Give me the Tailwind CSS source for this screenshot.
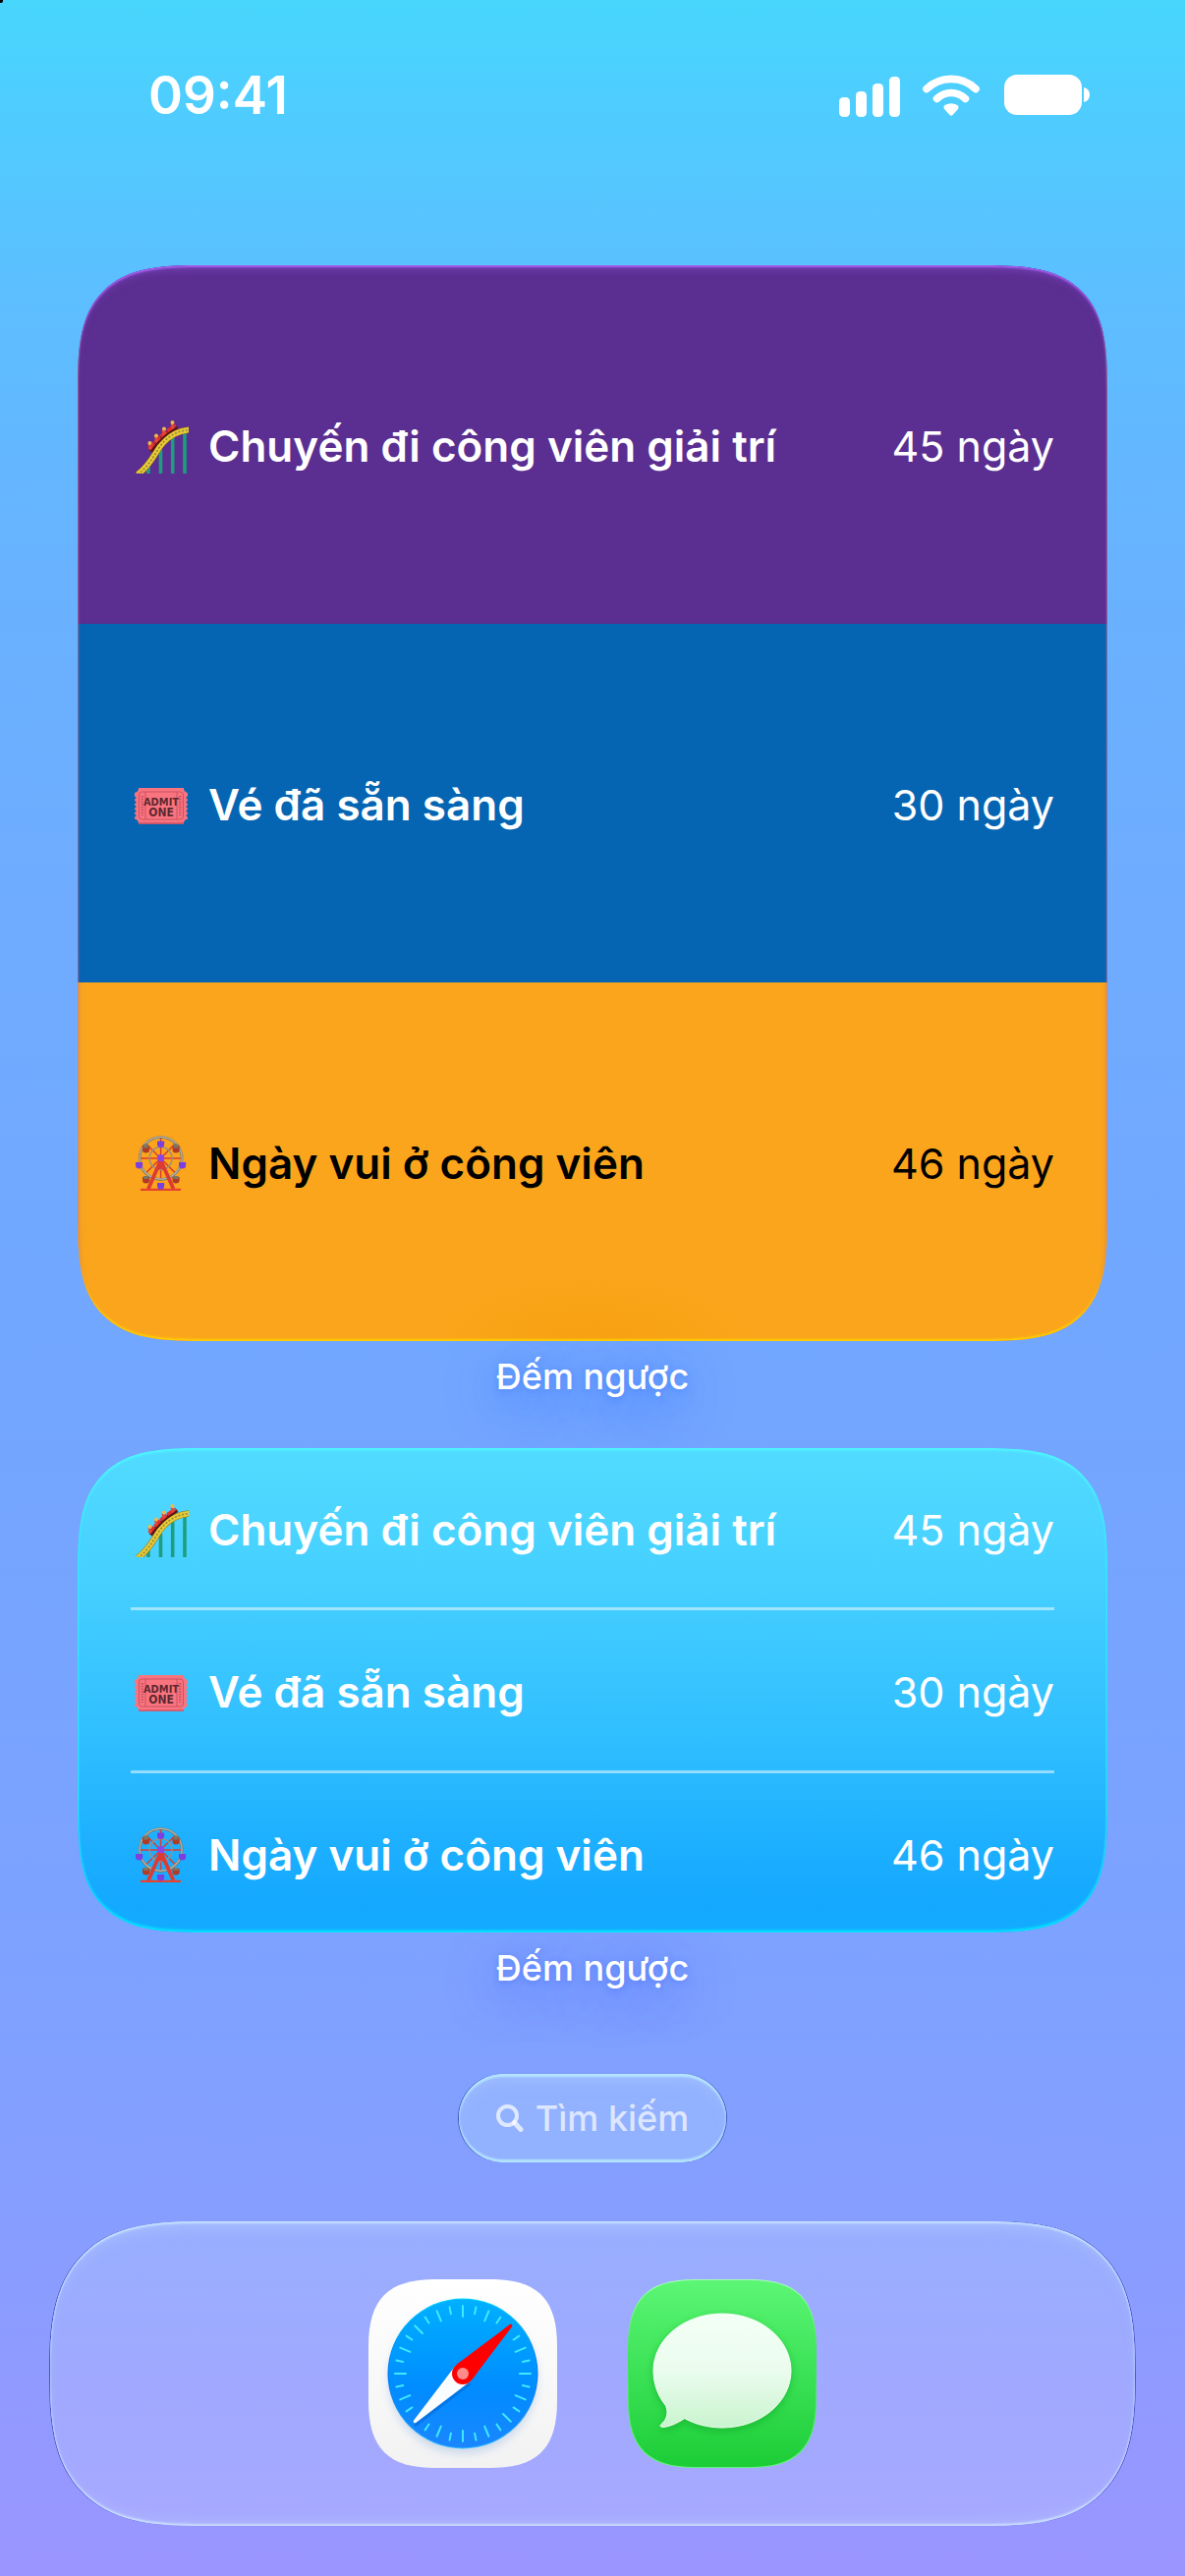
<!DOCTYPE html>
<html lang="vi">
<head>
<meta charset="utf-8">
<meta name="viewport" content="width=device-width, initial-scale=1">
<title>Đếm ngược</title>
<script src="https://cdn.jsdelivr.net/npm/@tailwindcss/browser@4"></script>
</head>
<body class="flex min-h-screen flex-col bg-[linear-gradient(to_bottom,#47d6fc_0%,#50cbff_5%,#5cbfff_11%,#68b2ff_22%,#6facff_35%,#72a6ff_54%,#7ca2ff_74%,#869eff_86%,#9b95ff_100%)] font-['Inter',sans-serif] text-white">

<!-- shared symbols -->
<svg class="absolute size-0" aria-hidden="true">
  <defs>
    <symbol id="coaster" viewBox="0 0 56 56">
      <g stroke="#1f9d80" stroke-width="3.600"><path d="M15 56V48M27.500 56V32M39.700 56V19M52 56V12"/></g>
      <path d="M4 57C19 46 22 33 30 24.500S46 12.500 57 11.500" fill="none" stroke="#8f6d10" stroke-width="6.500"/>
      <path d="M4 57C19 46 22 33 30 24.500S46 12.500 57 11.500" fill="none" stroke="#e6cb36" stroke-width="5.500"/>
      <path d="M4 57C19 46 22 33 30 24.500S46 12.500 57 11.500" fill="none" stroke="#9a8636" stroke-width="1.600" stroke-dasharray="2 1.800"/>
      <path d="M17.500 33.500C24 23 33 14.500 44.500 8.500" fill="none" stroke="#5a1414" stroke-width="3.500"/>
      <path d="M16 31.500C23 21.500 32 13 43 7" fill="none" stroke="#e0302c" stroke-width="3.400" stroke-dasharray="8 .8"/>
      <g fill="#e0483a"><path d="M14.500 26l3 1 1.500 3-3 2zM21 18.500l3 1 1.500 3-3 2zM28.500 11.500l3 1 1.500 3-3 2zM37.500 5l3 1 1.500 3-3 2z"/></g>
      <g fill="#f0b84a"><circle cx="16.500" cy="25" r="2"/><circle cx="23" cy="17.500" r="2"/><circle cx="31" cy="10.500" r="2"/><circle cx="39.500" cy="4" r="2"/></g>
    </symbol>
    <symbol id="ticket" viewBox="0 0 56 56">
      <path d="M5 11h46c0 3 1 4 4 5v3.500a1.500 1.500 0 0 0 0 3v1.500a1.500 1.500 0 0 0 0 3v1.500a1.500 1.500 0 0 0 0 3v1.500a1.500 1.500 0 0 0 0 3v1.500a1.500 1.500 0 0 0 0 3v2c-3 1-4 2-4 5H5c0-3-1-4-4-5v-2a1.500 1.500 0 0 0 0-3v-1.500a1.500 1.500 0 0 0 0-3v-1.500a1.500 1.500 0 0 0 0-3v-1.500a1.500 1.500 0 0 0 0-3v-1.500a1.500 1.500 0 0 0 0-3V16c3-1 4-2 4-5z" fill="#fa7480"/>
      <path d="M5 47h46" stroke="#d4525e" stroke-width="1.500"/>
      <rect x="5.500" y="15" width="45" height="28" rx="3" fill="none" stroke="#c9535f" stroke-width="1"/>
      <path d="M12 15v28M44 15v28" stroke="#c9535f" stroke-width="1"/>
      <path d="M8.800 19v20M47.200 19v20" stroke="#c9535f" stroke-width="2.500" stroke-dasharray="1.500 1.200"/>
      <g fill="#5d2930" font-family="'Liberation Sans Narrow', 'DejaVu Sans Condensed', sans-serif" font-weight="700" font-size="12" text-anchor="middle"><text x="28" y="28.500" font-size="11">ADMIT</text><text x="28" y="39.500">ONE</text></g>
    </symbol>
    <symbol id="wheel" viewBox="0 0 56 56">
      <path d="M27.600 2v42M6 23h43M12.500 8l30 30M42.500 8l-30 30" stroke="#dd3b32" stroke-width="1.500"/>
      <circle cx="27.600" cy="23" r="11.500" fill="none" stroke="#9b8f80" stroke-width="1.500"/>
      <circle cx="27.600" cy="23" r="21.500" fill="none" stroke="#6f6a60" stroke-width="2.500"/>
      <circle cx="27.600" cy="22.700" r="21.500" fill="none" stroke="#b5b0a0" stroke-width="1.500"/>
      <path d="M27.600 25L15 54M27.600 25L40.500 54" stroke="#dd3b32" stroke-width="3.800"/>
      <path d="M27.600 24l-5.500 13 5.500-3.500 5.500 3.500z" fill="#dd3b32"/>
      <path d="M7 55h41" stroke="#e5432f" stroke-width="2.500"/>
      <g fill="#7b3fe0"><path d="M24 5.500h7.200v3a3.600 3.600 0 0 1-7.200 0zM2 27h7.200v3A3.600 3.600 0 0 1 2 30zM46 27h7.200v3a3.600 3.600 0 0 1-7.200 0zM24 48h7.200v3a3.600 3.600 0 0 1-7.200 0z"/></g>
      <g fill="#b03a24"><path d="M9 10h7.200v4A3.600 3.600 0 0 1 9 14zM39.500 10h7.200v4a3.600 3.600 0 0 1-7.200 0zM9 42h7.200v3A3.600 3.600 0 0 1 9 45zM39.500 42h7.200v3a3.600 3.600 0 0 1-7.200 0z"/></g>
      <g fill="#7d7660"><path d="M10 8.500h5v4h-5zM40.500 8.500h5v4h-5zM10 41h5v3h-5zM40.500 41h5v3h-5z"/></g>
      <circle cx="27.600" cy="22.700" r="3.600" fill="#8a45e8"/>
    </symbol>
  </defs>
</svg>

<!-- camera sensor mark -->
<span class="absolute top-0 left-0 size-[3px] rounded-br-[2px] bg-black"></span>

<header class="flex items-center justify-between pt-16 pr-[96px] pb-[140px] pl-[151px]">
  <time class="text-[53px] leading-[66px] font-semibold">09:41</time>
  <svg class="h-[46px] w-[256px]" viewBox="0 0 256 46" fill="#fff" role="img" aria-label="Tín hiệu, Wi-Fi, pin">
    <rect x="0" y="25" width="11" height="20" rx="4.500"/>
    <rect x="17" y="19" width="11" height="26" rx="4.500"/>
    <rect x="34" y="11" width="11" height="34" rx="4.500"/>
    <rect x="51" y="4" width="11" height="41" rx="4.500"/>
    <path d="M89 16.500C103 3 125 3 139 16.500M99.500 26.500C108 18.500 120 18.500 128.500 26.500" fill="none" stroke="#fff" stroke-width="7.600" stroke-linecap="round"/>
    <path d="M107.500 37.500c-1.500-1.500-1.500-3.500.5-4.700 4-2 8-2 12 0 2 1.200 2 3.200.5 4.700l-5 5.500c-1 1-2 1-3 0z"/>
    <rect x="168" y="2" width="79" height="41" rx="13"/>
    <path d="M249 15c4 1 6 4 6 7.500s-2 6.500-6 7.500z"/>
  </svg>
</header>

<main class="flex flex-col px-[79px]">
  <section class="relative z-10 overflow-hidden rounded-[128px] [corner-shape:superellipse(1.6)]" aria-label="Đếm ngược, cỡ lớn">
    <ul class="text-[44px] leading-[64px]">
      <li class="flex h-[365px] items-center bg-[#5b2e91] px-[54px] pt-[3px]">
        <svg class="mr-5 ml-[3px] size-14 shrink-0"><use href="#coaster"/></svg>
        <span class="grow font-semibold">Chuyến đi công viên giải trí</span><span class="text-[43px]">45 ngày</span>
      </li>
      <li class="flex h-[365px] items-center bg-[#0565b3] px-[54px] pt-[3px]">
        <svg class="mr-5 ml-[3px] size-14 shrink-0"><use href="#ticket"/></svg>
        <span class="grow font-semibold">Vé đã sẵn sàng</span><span class="text-[43px]">30 ngày</span>
      </li>
      <li class="flex h-[365px] items-center bg-[#fba51c] bg-[radial-gradient(ellipse_170px_70px_at_bottom,#f7a010,#fba51c)] px-[54px] pt-[3px] text-black">
        <svg class="mr-5 ml-[3px] size-14 shrink-0"><use href="#wheel"/></svg>
        <span class="grow font-semibold">Ngày vui ở công viên</span><span class="text-[43px]">46 ngày</span>
      </li>
    </ul>
    <div class="pointer-events-none absolute inset-0 rounded-[128px] [corner-shape:superellipse(1.6)] shadow-[inset_0_2px_2px_#a95ff5,inset_0_8px_10px_-4px_#7442b4,inset_0_-2px_2px_#ffd000]"></div>
  </section>
  <p class="mb-[37px] text-center text-[36px] leading-[72px] font-medium [text-shadow:0_2px_6px_rgba(60,120,250,0.5),0_12px_50px_rgba(20,90,255,0.6)]">Đếm ngược</p>

  <section class="relative z-10 overflow-hidden rounded-[128px] bg-[linear-gradient(to_bottom,#51dbff,#44ceff_30%,#2fbeff_60%,#15a9ff_92%,#12aaff)] px-[54px] [corner-shape:superellipse(1.6)]" aria-label="Đếm ngược, cỡ vừa">
    <ul class="divide-y-3 divide-white/50 text-[44px] leading-[64px]">
      <li class="flex h-[165px] items-center pt-[3px]">
        <svg class="mr-5 ml-[3px] size-14 shrink-0"><use href="#coaster"/></svg>
        <span class="grow font-semibold">Chuyến đi công viên giải trí</span><span class="text-[43px]">45 ngày</span>
      </li>
      <li class="flex h-[166px] items-center pt-[3px]">
        <svg class="mr-5 ml-[3px] size-14 shrink-0"><use href="#ticket"/></svg>
        <span class="grow font-semibold">Vé đã sẵn sàng</span><span class="text-[43px]">30 ngày</span>
      </li>
      <li class="flex h-[162px] items-center pt-[3px]">
        <svg class="mr-5 ml-[3px] size-14 shrink-0"><use href="#wheel"/></svg>
        <span class="grow font-semibold">Ngày vui ở công viên</span><span class="text-[43px]">46 ngày</span>
      </li>
    </ul>
    <div class="pointer-events-none absolute inset-0 rounded-[128px] [corner-shape:superellipse(1.6)] shadow-[inset_0_2px_3px_#4ffcff,inset_0_-2px_3px_#00f0ff]"></div>
  </section>
  <p class="mb-[72px] text-center text-[36px] leading-[72px] font-medium [text-shadow:0_2px_6px_rgba(70,110,245,0.5),0_12px_50px_rgba(50,90,255,0.6)]">Đếm ngược</p>
</main>

<button type="button" class="mx-auto flex h-[90px] items-center gap-3 rounded-full bg-[#92b1ff] px-[38px] text-[36px] font-medium text-white/70 shadow-[inset_0_3px_2px_#b4e4ff,inset_0_-3px_2px_#b4e4ff,inset_0_14px_16px_-8px_#a0bfff,1px_0_0_0_#4258bd,-1px_0_0_0_#4258bd]">
  <svg class="size-7" viewBox="0 0 28 28" fill="none" stroke="currentColor" stroke-linecap="round" aria-hidden="true"><circle cx="11.500" cy="11.500" r="9.500" stroke-width="4"/><path d="M18.500 18.500l6.500 7" stroke-width="5"/></svg>
  Tìm kiếm
</button>

<nav class="mx-[51px] mt-[60px] mb-[51px] flex h-[310px] items-center justify-center gap-[72px] rounded-[155px] bg-[linear-gradient(to_bottom,#98aeff,#a0a9ff_55%,#a7a8ff)] [corner-shape:superellipse(1.5)] shadow-[inset_0_2px_2px_#c6e2ff,inset_0_-2px_2px_#c8deff,inset_0_14px_16px_-8px_#aabfff,inset_0_-14px_16px_-10px_#b0b9ff,1px_0_0_0_#4a55c4,-1px_0_0_0_#4a55c4]" aria-label="Dock">
  <a href="#safari" aria-label="Safari">
    <svg class="size-48" viewBox="0 0 192 192">
      <defs>
        <linearGradient id="sbg" x2="0" y2="1"><stop stop-color="#fff"/><stop offset="1" stop-color="#f2f2f3"/></linearGradient>
        <linearGradient id="sface" x2="0" y2="1"><stop stop-color="#00b0ff"/><stop offset=".6" stop-color="#008cff"/><stop offset="1" stop-color="#1b86ff"/></linearGradient>
        <linearGradient id="sring" x2="0" y2="1"><stop stop-color="#00d4ff"/><stop offset=".5" stop-color="#0072f0"/><stop offset="1" stop-color="#38c0ff"/></linearGradient>
        <filter id="soft" x="-20%" y="-20%" width="140%" height="140%"><feGaussianBlur stdDeviation="4"/></filter>
        <path id="squircle" d="M0 68C0 20 20 0 68 0h56c48 0 68 20 68 68v56c0 48-20 68-68 68H68c-48 0-68-20-68-68z"/>
        <g id="quarter" stroke="#3fe9ff" stroke-width="2" stroke-linecap="round">
          <path d="M96 27v11"/><path d="M96 27v7" transform="rotate(11.250 96 96)"/>
          <path d="M96 27v11" transform="rotate(22.500 96 96)"/><path d="M96 27v7" transform="rotate(33.750 96 96)"/>
          <path d="M96 27v7" transform="rotate(56.250 96 96)"/><path d="M96 27v11" transform="rotate(67.500 96 96)"/>
          <path d="M96 27v7" transform="rotate(78.750 96 96)"/>
        </g>
      </defs>
      <use href="#squircle" fill="url(#sbg)"/>
      <circle cx="96" cy="102" r="76" fill="#9dbbe0" opacity=".45" filter="url(#soft)"/>
      <circle cx="96" cy="96" r="76.500" fill="url(#sring)"/>
      <circle cx="96" cy="96" r="75.500" fill="url(#sface)"/>
      <use href="#quarter"/><use href="#quarter" transform="rotate(90 96 96)"/><use href="#quarter" transform="rotate(180 96 96)"/><use href="#quarter" transform="rotate(270 96 96)"/>
      <g stroke="#3fe9ff" stroke-width="2" stroke-linecap="round"><path d="M96 27v11" transform="rotate(-45 96 96)"/><path d="M96 27v11" transform="rotate(135 96 96)"/></g>
      <g transform="rotate(45 96 96)">
        <path d="M85 96L94.500 165.500q1.500 2.500 3 0L107 96z" fill="#0058c0" opacity=".4" transform="translate(3 2)"/>
        <path d="M85 96L94.500 165.500q1.500 2.500 3 0L107 96z" fill="#fafdff"/>
        <path d="M85 96Q85 91 86 87L94.500 26.500q1.500-2.500 3 0L106 87Q107 91 107 96A11 11 0 0 1 85 96z" fill="#f00"/>
      </g>
      <circle cx="96" cy="96" r="6" fill="#ff8a8a"/>
    </svg>
  </a>
  <a href="#messages" aria-label="Tin nhắn">
    <svg class="size-48" viewBox="0 0 192 192">
      <defs>
        <linearGradient id="mbg" x2="0" y2="1"><stop stop-color="#5bf675"/><stop offset="1" stop-color="#1ccd37"/></linearGradient>
        <linearGradient id="medge" x2="0" y2="1"><stop stop-color="#a5ffb5"/><stop offset=".4" stop-color="#3fe25a"/><stop offset="1" stop-color="#62f47a"/></linearGradient>
        <linearGradient id="mbub" x2="0" y2="1"><stop stop-color="#f3fff5"/><stop offset=".5" stop-color="#ebfcee"/><stop offset="1" stop-color="#c9f4cf"/></linearGradient>
        <path id="bubble" d="M96 35c39 0 70 26 70 58S135 151 96 151c-14 0-27-3.300-38.300-9.400C51 146 43 150 35.500 150.500c-2.500 0-3.300-1.500-1.500-3 6-5 7.500-12 4.500-19C30.500 118.500 26 106.500 26 93 26 61 57 35 96 35z"/>
      </defs>
      <use href="#squircle" fill="url(#medge)"/>
      <use href="#squircle" fill="url(#mbg)" transform="translate(1 1) scale(.9896)"/>
      <use href="#bubble" fill="#0a9a20" opacity=".5" filter="url(#soft)" transform="translate(0 3)"/>
      <use href="#bubble" fill="url(#mbub)" stroke="#f4fff5" stroke-width="1"/>
    </svg>
  </a>
</nav>
</body>
</html>
